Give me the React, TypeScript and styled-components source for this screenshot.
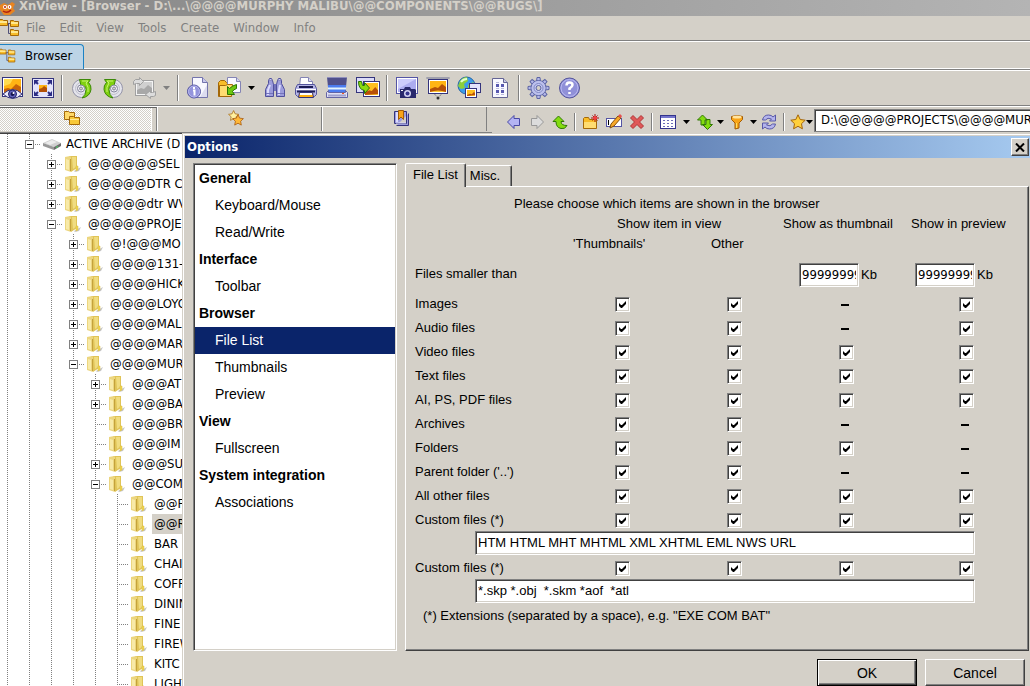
import React from 'react';
import styled, { createGlobalStyle, css } from 'styled-components';

const face = '#d4d0c8';
const tahoma = `"DejaVu Sans Condensed", "DejaVu Sans", sans-serif`;
const arial = `"Liberation Sans", Arial, sans-serif`;

const Global = createGlobalStyle`
  * { box-sizing: border-box; }
  body { margin: 0; background: ${face}; overflow: hidden; }
  button, input { font: inherit; color: inherit; }
`;

const sunken = css`
  border: 1px solid;
  border-color: #808080 #fff #fff #808080;
  box-shadow: inset 1px 1px #404040, inset -1px -1px ${face};
`;

/* ---------- main window ---------- */

const Desktop = styled.div`
  position: relative;
  height: 100vh;
  overflow: hidden;
  display: flex;
  flex-direction: column;
  background: ${face};
  font: 13px/16px ${tahoma};
  color: #000;
`;

const WindowTitle = styled.header`
  display: flex;
  align-items: flex-end;
  gap: 3px;
  flex: none;
  height: 16px;
  overflow: hidden;
  background: linear-gradient(90deg, #868686, #b4b4b4);
  color: ${face};
  white-space: nowrap;
`;

const WindowName = styled.h1`
  margin: 0;
  font: bold 13px/20px ${tahoma};
`;

const MenuBar = styled.nav`
  display: flex;
  align-items: center;
  flex: none;
  gap: 14px;
  height: 25px;
  border-bottom: 1px solid #808080;
`;

const MenuMark = styled.span`
  display: flex;
  margin-right: -8px;
`;

const MenuItem = styled.button`
  padding: 0;
  border: 0;
  background: none;
  color: #808080;
`;

const DocumentTabs = styled.div`
  display: flex;
  flex: none;
  height: 29px;
  padding-top: 2px;
  border-top: 1px solid #fff;
  border-bottom: 1px solid #808080;
  box-shadow: inset 0 -1px #fff;
`;

const DocumentTab = styled.button`
  display: flex;
  align-items: center;
  gap: 9px;
  width: 84px;
  padding: 0 0 2px;
  border: 1px solid #1c82c4;
  border-width: 1px 1px 0 0;
  border-radius: 0 4px 0 0;
  background: #bcd4e6;
`;

const Toolbar = styled.div`
  display: flex;
  align-items: center;
  flex: none;
  height: 36px;
  margin-left: -4px;
  border-top: 1px solid #fff;
  border-bottom: 1px solid #808080;
`;

const ToolButton = styled.button<{ $size?: number }>`
  display: flex;
  align-items: center;
  justify-content: center;
  flex: none;
  width: ${(p) => p.$size ?? 31}px;
  height: 24px;
  padding: 0;
  border: 0;
  background: none;
`;

const Separator = styled.span<{ $height?: number }>`
  flex: none;
  width: 2px;
  height: ${(p) => p.$height ?? 26}px;
  margin: 0 3px;
  border-left: 1px solid #808080;
  border-right: 1px solid #fff;
`;

const SecondBar = styled.div`
  display: flex;
  align-items: flex-start;
  flex: none;
  height: 27px;
  border-top: 1px solid #fff;
`;

const PanelTabs = styled.div`
  display: flex;
  flex: none;
  width: 492px;
  height: 26px;
  padding-bottom: 1px;
  border-bottom: 1px solid #808080;
`;

const PanelTab = styled.button<{ $active?: boolean }>`
  display: flex;
  align-items: center;
  justify-content: center;
  width: ${(p) => (p.$active ? 157 : 165)}px;
  padding: 0 7px 3px 0;
  border: 0;
  border-right: 1px solid #808080;
  box-shadow: inset 1px 0 #fff;
  background: none;
  ${(p) =>
    p.$active &&
    css`
      padding-right: 13px;
      border-top: 1px solid #606060;
      background: conic-gradient(#fff 25%, ${face} 0 50%, #fff 0 75%, ${face} 0) 0 0 / 2px 2px;
      box-shadow: inset -4px 0 ${face}, inset -5px 0 #fff;
    `}
`;

const AddressBar = styled.div`
  display: flex;
  align-items: center;
  flex: 1;
  min-width: 0;
  height: 26px;
  padding-left: 10px;
`;

const AddressTools = styled.div`
  display: flex;
  align-items: center;
  padding-top: 4px;
`;

const AddressField = styled.input`
  flex: 1;
  min-width: 0;
  height: 23px;
  margin-top: 1px;
  padding: 0 0 2px 6px;
  background: #fff;
  border: 1px solid #808080;
  border-right: 0;
  border-radius: 0;
  box-shadow: inset 1px 1px #404040;
`;

/* ---------- folder tree ---------- */

const TreePane = styled.ul`
  flex: 1;
  min-height: 0;
  margin: 0;
  padding: 0;
  overflow: hidden;
  list-style: none;
  background: #fff;
  border-top: 1px solid #404040;
`;

const TreeRow = styled.li`
  display: flex;
  height: 20px;
  margin-left: -4px;
  white-space: nowrap;
`;

const dotsDown = 'repeating-linear-gradient(#808080 0 1px, transparent 1px 2px) 11px 0 / 1px 100% no-repeat';
const dotsAcross = 'repeating-linear-gradient(90deg, #808080 0 1px, transparent 1px 2px) 100% 10px / 11px 1px no-repeat';

const Guide = styled.span<{ $branch?: boolean }>`
  flex: none;
  width: 22px;
  height: 20px;
  padding: 6px 0 0 7px;
  background: ${(p) => (p.$branch ? `${dotsDown}, ${dotsAcross}` : dotsDown)};
`;

const Expander = styled.button<{ $open: boolean }>`
  display: block;
  width: 9px;
  height: 9px;
  padding: 0;
  border: 1px solid #808080;
  background:
    linear-gradient(#000, #000) 1px 3px / 5px 1px no-repeat,
    linear-gradient(#000, #000) 3px 1px / 1px ${(p) => (p.$open ? 0 : 5)}px no-repeat,
    #fff;
`;

const TreeIcon = styled.span`
  display: flex;
  align-items: center;
  flex: none;
  width: 22px;
  padding-left: 2px;
`;

const TreeLabel = styled.span<{ $selected?: boolean }>`
  margin-left: 2px;
  padding: 0 2px;
  line-height: 20px;
  background: ${(p) => (p.$selected ? face : 'none')};
`;

/* ---------- options dialog ---------- */

const Dialog = styled.section`
  position: absolute;
  top: 133px;
  left: 182px;
  right: 0;
  padding: 1px 0 8px 1px;
  background: ${face};
  border: 1px solid ${face};
  border-width: 1px 0 0 1px;
  box-shadow: inset 1px 1px #fff;
  font: 13px/16px ${arial};
`;

const DialogTitle = styled.header`
  display: flex;
  align-items: center;
  justify-content: space-between;
  height: 22px;
  margin: 1px 0 0 1px;
  padding: 0 1px 0 2px;
  background: linear-gradient(90deg, #0a246a, #a6caf0);
  color: #fff;
`;

const DialogName = styled.h2`
  margin: 0;
  font: bold 13px/20px ${tahoma};
`;

const raised = css`
  border: 1px solid;
  border-color: #fff #404040 #404040 #fff;
  box-shadow: inset -1px -1px #808080;
  background: ${face};
`;

const CloseButton = styled.button`
  display: flex;
  align-items: center;
  justify-content: center;
  width: 18px;
  height: 18px;
  padding: 0;
  ${raised}
`;

const DialogBody = styled.div`
  display: flex;
  gap: 8px;
  padding: 5px 1px 0 9px;
`;

const Categories = styled.nav`
  flex: none;
  width: 204px;
  padding: 1px;
  background: #fff;
  ${sunken}
`;

const CategoryHeading = styled.h3`
  margin: 0;
  padding-left: 4px;
  font: bold 14px/27px ${arial};
`;

const CategoryLink = styled.a<{ $selected?: boolean }>`
  display: block;
  padding-left: 20px;
  line-height: 27px;
  font-size: 14px;
  text-decoration: none;
  color: ${(p) => (p.$selected ? '#fff' : '#000')};
  background: ${(p) => (p.$selected ? '#0a246a' : 'none')};
`;

const Pages = styled.div`
  display: flex;
  flex-direction: column;
  flex: 1;
  min-width: 0;
`;

const PageTabs = styled.div`
  display: flex;
  align-items: flex-end;
  height: 23px;
`;

const PageTab = styled.button<{ $active?: boolean }>`
  position: relative;
  z-index: 1;
  height: ${(p) => (p.$active ? 24 : 21)}px;
  margin-bottom: ${(p) => (p.$active ? -1 : 0)}px;
  padding: ${(p) => (p.$active ? '0 7px 1px 7px' : '0 11px 0 4px')};
  background: ${face};
  border: 1px solid #fff;
  border-width: 1px 1px 0 ${(p) => (p.$active ? 1 : 0)}px;
  border-right-color: #404040;
  border-radius: 2px 2px 0 0;
  box-shadow: inset -1px 0 #808080;
`;

const Page = styled.div`
  flex: 1;
  padding: 6px 0 21px;
  ${raised}
`;

const PageIntro = styled.p`
  margin: 0;
  padding: 2px 0 0 108px;
  line-height: 18px;
`;

const Grid = styled.table`
  width: 100%;
  table-layout: fixed;
  border-collapse: collapse;
`;

const Col = styled.col<{ $width?: number }>`
  width: ${(p) => (p.$width ? `${p.$width}px` : 'auto')};
`;

const Head = styled.th<{ $indent: number }>`
  height: 20px;
  padding: 2px 0 0 ${(p) => p.$indent}px;
  font-weight: normal;
  line-height: 18px;
  text-align: left;
  white-space: nowrap;
`;

const RowLabel = styled.th`
  height: 24px;
  padding: 2px 0 0 9px;
  font-weight: normal;
  line-height: 22px;
  text-align: left;
`;

const SizeLabel = styled(RowLabel)`
  height: 38px;
  padding-top: 12px;
  line-height: 18px;
  vertical-align: top;
`;

const SizeCell = styled.td<{ $indent: number }>`
  padding: 10px 0 0 ${(p) => p.$indent}px;
  vertical-align: top;
`;

const SizeField = styled.label`
  display: flex;
  align-items: center;
  gap: 2px;
`;

const NumberBox = styled.input`
  width: 60px;
  height: 24px;
  padding: 0 2px 2px;
  border-radius: 0;
  background: #fff;
  font-family: ${tahoma};
  ${sunken}
`;

const Cell = styled.td<{ $indent: number }>`
  padding: 6px 0 0 ${(p) => p.$indent}px;
  vertical-align: top;
`;

const Tick = styled.input`
  appearance: none;
  display: block;
  width: 15px;
  height: 15px;
  margin: 0;
  padding: 3px;
  background: #fff;
  ${sunken}
  &:checked::before {
    content: '';
    display: block;
    width: 7px;
    height: 7px;
    background: #000;
    clip-path: polygon(0 2px, 2px 4px, 3px 4px, 7px 0, 7px 3px, 3px 7px, 2px 7px, 0 5px);
  }
`;

const Dash = styled.span`
  display: block;
  width: 8px;
  height: 2px;
  margin: 7px 0 0 2px;
  background: #000;
`;

const ExtensionCell = styled.td`
  height: 24px;
  padding: 0 53px 0 69px;
`;

const ExtensionBox = styled.input`
  display: block;
  width: 100%;
  height: 24px;
  padding: 0 2px 2px;
  border-radius: 0;
  background: #fff;
  ${sunken}
`;

const Note = styled.p`
  margin: 0;
  padding-left: 17px;
  line-height: 26px;
`;

const DialogButtons = styled.div`
  display: flex;
  justify-content: flex-end;
  gap: 8px;
  padding: 8px 5px 0;
`;

const PushButton = styled.button<{ $default?: boolean }>`
  width: 100px;
  height: 27px;
  padding: 0;
  font-size: 14px;
  ${raised}
  ${(p) =>
    p.$default &&
    css`
      border-color: #000;
      box-shadow: inset 1px 1px #fff, inset -1px -1px #404040, inset -2px -2px #808080;
    `}
`;

/* ---------- icons ---------- */

const Svg = ({ s = 24, children }: { s?: number; children: React.ReactNode }) => (
  <svg width={s} height={s} viewBox={`0 0 ${s} ${s}`} aria-hidden="true">
    {children}
  </svg>
);

const Picture = ({ x, y, w, h }: { x: number; y: number; w: number; h: number }) => (
  <g>
    <rect x={x + 0.5} y={y + 0.5} width={w - 1} height={h - 1} fill="#fff" stroke="#34347c" />
    <rect x={x + 2} y={y + 2} width={w - 4} height={h - 4} fill="#ffc020" />
    <path
      d={`M${x + 2} ${y + h * 0.7}l${w * 0.25} -${h * 0.12} ${w * 0.15} ${h * 0.05} ${w * 0.2} -${h * 0.25} ${w * 0.4 - 4} ${h * 0.2}V${y + h - 3}L${x + 2} ${y + h - 2}z`}
      fill="#b85008"
    />
  </g>
);

const FolderTree = ({ s = 20 }: { s?: number }) => (
  <svg width={s} height={s} viewBox="0 0 20 20" aria-hidden="true">
    <path d="M8 5.500h3M8.500 5v10.500h3" fill="none" stroke="#505078" />
    {[[-1, 1], [10, 2], [10, 11]].map(([x, y]) => (
      <g key={`${x}${y}`}>
        <path d={`M${x + 0.5} ${y + 6.5}v-6h3l1 1h4v5z`} fill="#f8bc28" stroke="#a46808" />
        <path d={`M${x + 1} ${y + 3}h7`} stroke="#ffe890" strokeWidth="2" />
      </g>
    ))}
  </svg>
);

const ViewIcon = () => (
  <Svg>
    <rect x="2.500" y="1.500" width="20" height="19" fill="#fff" stroke="#34347c" />
    <path d="M4 3h17v16H4z" fill="#ffb414" />
    <path d="M4 3h9l-3 5-6 2z" fill="#ffdc50" />
    <path d="M4 13l4-1 3 1 5-5 5 3v8H4z" fill="#c86408" />
    <path d="M3 18q10-9 19 0-9 9-19 0z" fill="#ececfc" stroke="#34347c" />
    <circle cx="12.500" cy="18" r="4" fill="#6464bc" stroke="#24246c" />
    <circle cx="12.500" cy="18" r="2" fill="#14144c" />
    <circle cx="13.500" cy="17" r="1" fill="#fff" />
  </Svg>
);

const FullScreenIcon = () => (
  <Svg>
    <rect x="1.500" y="2.500" width="21" height="19" fill="#e4e4fc" stroke="#34347c" />
    <path d="M3 4h5L3 9zM21 4h-5l5 5zM3 20h5l-5-5zM21 20h-5l5-5z" fill="#2c2c84" />
    <path d="M5 6l2 2M19 6l-2 2M5 18l2-2M19 18l-2-2" stroke="#2c2c84" strokeWidth="2" />
    <rect x="8" y="9" width="8" height="7" fill="#ffb414" />
    <path d="M8 13l3-1 2-2 3 2v4H8z" fill="#b45008" />
  </Svg>
);

const RotateIcon = ({ flip }: { flip?: boolean }) => (
  <Svg>
    <g transform={flip ? 'translate(24 0) scale(-1 1)' : undefined}>
      <circle cx="11.500" cy="12.500" r="9" fill="#e4e4ec" stroke="#9494a8" />
      <circle cx="11.500" cy="12.500" r="6" fill="none" stroke="#c0c0cc" />
      <path
        d="M9.500 3.500h11l-2 3q3 3 2.500 7-1 7-9 8.500 4-3 4-8.500 0-2-1-3l-3 3z"
        fill="#80d010"
        stroke="#3c8808"
      />
      <path d="M12 5h6l-2 2q3 4 2 9" fill="none" stroke="#c8f470" />
      <circle cx="11" cy="12.500" r="3.500" fill="#f4f4f8" stroke="#84849c" />
      <circle cx="11" cy="12.500" r="1.500" fill={face} stroke="#84849c" />
    </g>
  </Svg>
);

const ConvertIcon = () => (
  <Svg>
    <rect x="3.500" y="4.500" width="18" height="15" fill="#f4f4f4" stroke="#a0a0a0" />
    <path d="M5 6h15v12H5z" fill="#d0d0d0" />
    <path d="M5 14l4-2 3 1 4-4 4 3v6H5z" fill="#a8a8a8" />
    <path d="M1.500 8.500v-3l2-2h4v-2l4 4-4 4v-2h-3zM23.500 15.500v4l-2 1h-3v2l-5-4 5-4v2h2z" fill="#dcdcdc" stroke="#a0a0a0" />
  </Svg>
);

const InfoIcon = () => (
  <Svg>
    <path d="M6.500 1.500h10l5 5v15h-15z" fill="#f8f8ff" stroke="#7474ac" />
    <path d="M16.500 1.500v5h5" fill="#c8c8ec" stroke="#7474ac" />
    <path d="M21 9v12h-7z" fill="#dcdcf0" />
    <circle cx="8" cy="15.500" r="6.500" fill="#9494dc" stroke="#5454a0" />
    <circle cx="8" cy="15.500" r="5.500" fill="none" stroke="#b8b8ee" />
    <path d="M7 14.500h1.500v5M8 11v2" fill="none" stroke="#fff" strokeWidth="2" />
  </Svg>
);

const OpenIcon = () => (
  <Svg>
    <path d="M1.500 20.500v-14l2-2h4l2 2h3v14z" fill="#f8bc28" stroke="#a46808" />
    <path d="M10.500 1.500h9l4 4v11h-13z" fill="#f8f8ff" stroke="#8484b4" />
    <path d="M19.500 1.500v4h4" fill="#d4d4ec" stroke="#8484b4" />
    <path d="M2.500 20.500v-11h6l2-1h5l-1 12z" fill="#ffdc70" stroke="#a46808" />
    <path d="M10.500 18.500v-8l2 2q3-3 7-4v4q-3 1-4 3l2 3z" fill="#6cc810" stroke="#287404" />
  </Svg>
);

const BinocularsIcon = () => (
  <Svg>
    <path d="M9 8h6v7H9z" fill="#7474bc" />
    <path d="M2.500 20.500v-7l3-6V4.500h4l1 4v12zM21.500 20.500v-7l-3-6V4.500h-4l-1 4v12z" fill="#9c9cdc" stroke="#50509c" />
    <path d="M5.500 4.500l1-2h2l1 2M14.500 4.500l1-2h2l1 2" fill="#c8c8f0" stroke="#50509c" />
    <path d="M5 19v-5l2-5M16 19v-5l1-5" fill="none" stroke="#dcdcfc" strokeWidth="2" />
    <path d="M3 17.500h7M14 17.500h7" stroke="#7474bc" />
  </Svg>
);

const PrinterIcon = () => (
  <Svg>
    <path d="M5.500 10.500l1-9h8l4 4v5z" fill="#fff" stroke="#8484b4" />
    <path d="M14.500 1.500v4h4" fill="#dcdcf0" stroke="#8484b4" />
    <path d="M3.500 8.500h17l2 4v6l-2 2h-17l-2-2v-6z" fill="#b4b4e4" stroke="#54549c" />
    <path d="M5 11h14M3 15.500h18" stroke="#1c1c54" strokeWidth="2" />
    <path d="M2 13.500h20" stroke="#fff" />
    <path d="M5.500 16.500h13l1 5h-15z" fill="#ffb010" stroke="#34347c" />
    <path d="M6 18h12" stroke="#fff" strokeWidth="2" />
  </Svg>
);

const ScannerIcon = () => (
  <Svg>
    <path d="M2 1h20l-1 10H3z" fill="#50508c" />
    <path d="M2 1.500h20" stroke="#9090bc" />
    <path d="M3 9h18v7H3z" fill="#4c7cf0" />
    <path d="M3 12.500h18" stroke="#e4f4ff" strokeWidth="2" />
    <path d="M1.500 16.500l2-2v2h17v-2l2 2v5h-21z" fill="#e0e0f4" stroke="#6464a4" />
    <path d="M3 19.500h18" stroke="#a0a0cc" strokeWidth="2" />
    <path d="M17 17h2v1h-2z" fill="#f05820" />
  </Svg>
);

const BatchIcon = () => (
  <Svg>
    <rect x="0.500" y="1.500" width="18" height="15" fill="#dcdcf8" stroke="#34347c" />
    <Picture x={7} y={5} w={17} h={16} />
    <path d="M2.500 5.500h3l1 4h2v-3l5 5.500-5 5.500v-3q-6-1-6-9z" fill="#8cdc10" stroke="#287404" />
  </Svg>
);

const CaptureIcon = () => (
  <Svg>
    <rect x="1.500" y="1.500" width="21" height="16" fill="#fff" stroke="#5454a4" />
    <path d="M3 3h18v13H3z" fill="#acacf0" />
    <path d="M3 3h18L3 13z" fill="#ccccfc" />
    <path d="M5 13h4l1-2h5l1 2h4l1 1v8H5z" fill="#28286c" />
    <circle cx="12.500" cy="17.500" r="3.500" fill="#d4d4f4" />
    <circle cx="12.500" cy="17.500" r="2" fill="#34348c" />
    <path d="M6 14.500h2" stroke="#fff" />
  </Svg>
);

const SlideshowIcon = () => (
  <Svg>
    <path d="M8.500 18l3.500 4 3.500-4" fill="none" stroke="#606060" strokeDasharray="1 1" />
    <circle cx="12" cy="22" r="1.500" fill="#303030" />
    <rect x="2.500" y="3.500" width="19" height="14" fill="#fff" stroke="#34347c" />
    <path d="M4 5h16v11H4z" fill="#ffb414" />
    <path d="M4 13l5-2 3 1 4-4 4 3v5H4z" fill="#b45008" />
    <path d="M4 16q8-3 16 0z" fill="#ffc830" />
    <path d="M0.500 1.500h23v1h-23z" fill="#fff" stroke="#a0a0ac" />
  </Svg>
);

const GlobeIcon = () => (
  <Svg>
    <circle cx="9.500" cy="9.500" r="8.500" fill="#3c9cec" stroke="#2464a4" />
    <path d="M3 5q3-4 7-4l1 4-4 3 1 4-4 1-3-3zM11 9l5-3 2 3-3 6-4-1z" fill="#8cd03c" />
    <path d="M4 6q2-3 6-3" stroke="#e4ffd0" fill="none" strokeWidth="2" />
    <rect x="12.500" y="7.500" width="11" height="9" fill="#e4e4fc" stroke="#34347c" />
    <Picture x={8} y={12} w={12} h={10} />
  </Svg>
);

const ContactIcon = () => (
  <Svg>
    <path d="M4.500 2.500h11l4 4v15h-15z" fill="#f8f8ff" stroke="#646494" />
    <path d="M15.500 2.500v4h4" fill="#c8c8e4" stroke="#646494" />
    <path d="M8 8h3v3H8zM13 8h3v3h-3zM8 14h3v3H8zM13 14h3v3h-3z" fill="#5858b0" />
    <path d="M8 6.500h3M8 12.500h3M13 12.500h3M8 18.500h3M13 18.500h3" stroke="#b8b8dc" />
  </Svg>
);

const GearIcon = () => (
  <Svg>
    <g fill="#b4b8e8" stroke="#5c64a4">
      {[0, 45, 90, 135, 180, 225, 270, 315].map((a) => (
        <path key={a} d="M9.500 5.500l.5-4h3l.5 4z" transform={`rotate(${a} 11.500 12)`} />
      ))}
      <circle cx="11.500" cy="12" r="7.500" />
    </g>
    <circle cx="11.500" cy="12" r="7" fill="#bcc0ec" />
    <circle cx="11.500" cy="12" r="4.500" fill="#c8ccf4" stroke="#8088c4" />
    <circle cx="11.500" cy="12" r="2.500" fill={face} stroke="#5c64a4" />
  </Svg>
);

const HelpIcon = () => (
  <Svg>
    <circle cx="11.500" cy="12" r="10" fill="#9090d8" stroke="#54549c" />
    <circle cx="11.500" cy="12" r="8.500" fill="none" stroke="#b8b8f0" />
    <path d="M8.500 9.500q0-3 3-3t3 2.500q0 1.500-3 3.500v1.500M11.500 16v2" fill="none" stroke="#fff" strokeWidth="2.500" />
  </Svg>
);

const ArrowIcon = ({ color, stroke, flip }: { color: string; stroke: string; flip?: boolean }) => (
  <Svg s={16}>
    <path
      d="M1.500 8L8 1.500v3h5.500v7H8v3z"
      fill={color}
      stroke={stroke}
      transform={flip ? 'translate(16 0) scale(-1 1)' : undefined}
    />
  </Svg>
);

const UpIcon = () => (
  <Svg s={16}>
    <path d="M1 7.500L6.500 2 12 7.500H9q0 4 6 4-2 4-6 3-5-1-5-7z" fill="#84dc10" stroke="#307804" />
  </Svg>
);

const NewFolderIcon = () => (
  <Svg s={16}>
    <path d="M.5 14.500v-10l1-1h4l1 2h7v9z" fill="#f8bc28" stroke="#a46808" />
    <path d="M1 14V8h12v6z" fill="#ffdc70" />
    <path d="M12 0v8M8 4h8M9.500 1.500l5 5M14.500 1.500l-5 5" stroke="#a01010" />
    <circle cx="12" cy="4" r="2" fill="#f04040" />
  </Svg>
);

const RenameIcon = () => (
  <Svg s={16}>
    <rect x=".5" y="4.500" width="15" height="8" fill="#fff" stroke="#5454a4" />
    <path d="M2.500 6v5" stroke="#000" />
    <path d="M4 14l1-4 7-8 3 2-7 8z" fill="#f8a828" stroke="#845008" />
    <path d="M12 2l3 2 1-2-2-2z" fill="#e45050" />
  </Svg>
);

const DeleteIcon = () => (
  <Svg s={16}>
    <path d="M1.500 4L4 1.500l4 4 4-4L14.500 4l-4 4 4 4-2.500 2.500-4-4-4 4L1.500 12l4-4z" fill="#e05858" stroke="#b03434" />
  </Svg>
);

const ListIcon = () => (
  <Svg s={16}>
    <rect x=".5" y="1.500" width="15" height="13" fill="#fff" stroke="#34348c" />
    <path d="M1 3h14" stroke="#7474cc" strokeWidth="2" />
    <path d="M3 6.500h10M3 9.500h10M3 12.500h10" stroke="#6c6cb8" strokeDasharray="2 2" />
  </Svg>
);

const SortIcon = () => (
  <Svg s={16}>
    <path d="M.5 6L5.500 1 10.500 6H8v5H4V6zM5.500 10.500l5 5 5-5H13v-5H9v5z" fill="#84dc10" stroke="#307804" />
  </Svg>
);

const FilterIcon = () => (
  <Svg s={16}>
    <path d="M2.500 2.500q5.500-2 11 0v3L10 9v5l-4 1V9L2.500 5.500z" fill="#f8a418" stroke="#a45c04" />
    <ellipse cx="8" cy="3" rx="4.500" ry="1.500" fill="#ffe4a0" />
    <path d="M7.500 9v5" stroke="#ffe060" />
  </Svg>
);

const RefreshIcon = () => (
  <Svg s={16}>
    <path d="M1.500 6q1-5 6-5 3 0 4.500 2l2.500-2v6h-6l2-2q-4-2-6 1zM14.500 10q-1 5-6 5-3 0-4.500-2l-2.500 2V9h6l-2 2q4 2 6-1z" fill="#b4b4ec" stroke="#5858a8" />
  </Svg>
);

const starPath = 'M8 .8l2.200 4.700 5 .7-3.700 3.500.9 5.100L8 12.300l-4.400 2.500.9-5.100L.8 6.200l5-.7z';

const StarIcon = () => (
  <Svg s={16}>
    <path d={starPath} fill="#ffd03c" stroke="#a46408" />
  </Svg>
);

const TwoStarsIcon = () => (
  <Svg s={16}>
    <path d={starPath} transform="scale(.7)" fill="#fff0a0" stroke="#a46408" />
    <path d={starPath} transform="translate(4 4) scale(.75)" fill="#ffb838" stroke="#a45408" />
  </Svg>
);

const FoldersIcon = () => (
  <Svg s={16}>
    <path d="M.5 9.500v-8h4l1 1h5v7z" fill="#ffd868" stroke="#a46808" />
    <path d="M5.500 14.500v-8h4l1 1h5v7z" fill="#f8c838" stroke="#a46808" />
    <path d="M6 9.500h9" stroke="#ffe890" />
  </Svg>
);

const BookmarkIcon = () => (
  <Svg s={16}>
    <path d="M3.500 15.500h12v-12M1.500 1.500h12v12h-12z" fill="#9c9cdc" stroke="#34347c" />
    <path d="M3 2h2v10H3zM3 12.500h10v1H3z" fill="#dcdcff" />
    <path d="M5.500.5h5v9L8 7 5.500 9.500z" fill="#f8a418" stroke="#a45c04" />
  </Svg>
);

const CaretIcon = ({ color = '#000' }: { color?: string }) => (
  <svg width="7" height="4" viewBox="0 0 7 4" aria-hidden="true">
    <path d="M0 0h7L3.500 4z" fill={color} />
  </svg>
);

const FolderIcon = () => (
  <svg width="18" height="18" viewBox="0 0 18 18" aria-hidden="true">
    <path d="M10 16l7-4-2 4-4 1z" fill="#a0a0a0" opacity=".6" />
    <path d="M5 1h8v12l-6 4z" fill="#e0c458" />
    <path d="M8 2h4v10l-3 2z" fill="#f0dc80" />
    <path d="M1 2l5-1 1 1v15l-6-2z" fill="#ecd680" />
    <path d="M2 4l3 1v10l-3-1z" fill="#f8eaa8" />
    <path d="M6.500 4v12" stroke="#c4a23c" />
    <path d="M12 11h2v4l-2 1z" fill="#f0d850" stroke="#d8b840" strokeWidth=".5" />
  </svg>
);

const DriveIcon = () => (
  <svg width="20" height="12" viewBox="0 0 20 12" aria-hidden="true">
    <path d="M1 5l9-4 9 4-7 4z" fill="#d0d0d0" />
    <path d="M3 5l7-3 5 2-7 3z" fill="#ececec" />
    <path d="M1 5l11 4v3L1 8z" fill="#989898" />
    <path d="M12 9l7-4v3l-7 4z" fill="#6c6c6c" />
    <path d="M14 9.500l2-1" stroke="#40e060" />
  </svg>
);

const AppIcon = () => (
  <svg width="16" height="16" viewBox="0 0 16 16" aria-hidden="true">
    <path d="M0 5l4-2 4 2 4-3 3 2-2 4 2 3-5 4H4l-4-5z" fill="#e88420" />
    <circle cx="5" cy="7" r="2" fill="#fff" />
    <circle cx="9.500" cy="7" r="2" fill="#fff" />
    <path d="M4 7h2M9 7h1M3 11q4 3 8-1" stroke="#b02010" strokeWidth="1.500" fill="none" />
  </svg>
);

/* ---------- data ---------- */

const menus = ['File', 'Edit', 'View', 'Tools', 'Create', 'Window', 'Info'];

type Node = { level: number; label: string; state?: 'open' | 'closed'; selected?: boolean };

const nodes: Node[] = [
  { level: 0, label: 'ACTIVE ARCHIVE (D', state: 'open' },
  { level: 1, label: '@@@@@@SEL', state: 'closed' },
  { level: 1, label: '@@@@@DTR C', state: 'closed' },
  { level: 1, label: '@@@@@dtr WV', state: 'closed' },
  { level: 1, label: '@@@@@PROJE', state: 'open' },
  { level: 2, label: '@!@@@MO', state: 'closed' },
  { level: 2, label: '@@@@131-', state: 'closed' },
  { level: 2, label: '@@@@HICK', state: 'closed' },
  { level: 2, label: '@@@@LOYO', state: 'closed' },
  { level: 2, label: '@@@@MAL', state: 'closed' },
  { level: 2, label: '@@@@MAR', state: 'closed' },
  { level: 2, label: '@@@@MUR', state: 'open' },
  { level: 3, label: '@@@AT', state: 'closed' },
  { level: 3, label: '@@@BA', state: 'closed' },
  { level: 3, label: '@@@BR' },
  { level: 3, label: '@@@IM' },
  { level: 3, label: '@@@SU', state: 'closed' },
  { level: 3, label: '@@COM', state: 'open' },
  { level: 4, label: '@@F' },
  { level: 4, label: '@@R', selected: true },
  { level: 4, label: 'BAR' },
  { level: 4, label: 'CHAI' },
  { level: 4, label: 'COFF' },
  { level: 4, label: 'DININ' },
  { level: 4, label: 'FINE' },
  { level: 4, label: 'FIREW' },
  { level: 4, label: 'KITC' },
  { level: 4, label: 'LIGHT' },
];

const categories = [
  { title: 'General', items: ['Keyboard/Mouse', 'Read/Write'] },
  { title: 'Interface', items: ['Toolbar'] },
  { title: 'Browser', items: ['File List', 'Thumbnails', 'Preview'] },
  { title: 'View', items: ['Fullscreen'] },
  { title: 'System integration', items: ['Associations'] },
];

const columns = [
  { name: "'Thumbnails' view", indent: 49 },
  { name: 'Other views', indent: 49 },
  { name: 'Show as thumbnail', indent: 57 },
  { name: 'Show in preview', indent: 57 },
];

type FileKind = { label: string; ticks: number[]; extensions?: string };

const kinds: FileKind[] = [
  { label: 'Images', ticks: [1, 1, 0, 1] },
  { label: 'Audio files', ticks: [1, 1, 0, 1] },
  { label: 'Video files', ticks: [1, 1, 1, 1] },
  { label: 'Text files', ticks: [1, 1, 1, 1] },
  { label: 'AI, PS, PDF files', ticks: [1, 1, 1, 1] },
  { label: 'Archives', ticks: [1, 1, 0, 0] },
  { label: 'Folders', ticks: [1, 1, 1, 0] },
  { label: "Parent folder ('..')", ticks: [1, 1, 0, 0] },
  { label: 'All other files', ticks: [1, 1, 1, 1] },
  { label: 'Custom files (*)', ticks: [1, 1, 1, 1], extensions: 'HTM HTML MHT MHTML XML XHTML EML NWS URL' },
  { label: 'Custom files (*)', ticks: [1, 1, 1, 1], extensions: '*.skp *.obj  *.skm *aof  *atl' },
];

/* ---------- parts ---------- */

const Tool = ({ name, size, children }: { name: string; size?: number; children: React.ReactNode }) => (
  <ToolButton type="button" aria-label={name} $size={size}>
    {children}
  </ToolButton>
);

const MainToolbar = () => (
  <Toolbar role="toolbar" aria-label="Main">
    <Tool name="View"><ViewIcon /></Tool>
    <Tool name="Full screen"><FullScreenIcon /></Tool>
    <Separator />
    <Tool name="Rotate left"><RotateIcon /></Tool>
    <Tool name="Rotate right"><RotateIcon flip /></Tool>
    <Tool name="Convert"><ConvertIcon /></Tool>
    <Tool name="Convert options" size={15}><CaretIcon color="#808080" /></Tool>
    <Separator />
    <Tool name="Properties"><InfoIcon /></Tool>
    <Tool name="Open with"><OpenIcon /></Tool>
    <Tool name="Open with options" size={15}><CaretIcon /></Tool>
    <Tool name="Search"><BinocularsIcon /></Tool>
    <Tool name="Print"><PrinterIcon /></Tool>
    <Tool name="Scan"><ScannerIcon /></Tool>
    <Tool name="Batch convert"><BatchIcon /></Tool>
    <Separator />
    <Tool name="Capture"><CaptureIcon /></Tool>
    <Tool name="Slide show"><SlideshowIcon /></Tool>
    <Tool name="Web page"><GlobeIcon /></Tool>
    <Tool name="Contact sheet"><ContactIcon /></Tool>
    <Separator />
    <Tool name="Options"><GearIcon /></Tool>
    <Tool name="About"><HelpIcon /></Tool>
  </Toolbar>
);

const Address = () => (
  <AddressBar>
    <AddressTools role="toolbar" aria-label="Navigation">
      <Tool name="Back" size={23}><ArrowIcon color="#b4b4f4" stroke="#4848a4" /></Tool>
      <Tool name="Forward" size={23}><ArrowIcon color="#dcdcdc" stroke="#989898" flip /></Tool>
      <Tool name="Up" size={23}><UpIcon /></Tool>
      <Separator $height={18} />
      <Tool name="New folder" size={23}><NewFolderIcon /></Tool>
      <Tool name="Rename" size={23}><RenameIcon /></Tool>
      <Tool name="Delete" size={23}><DeleteIcon /></Tool>
      <Separator $height={18} />
      <Tool name="View as" size={23}><ListIcon /></Tool>
      <Tool name="View choices" size={14}><CaretIcon /></Tool>
      <Tool name="Sort" size={23}><SortIcon /></Tool>
      <Tool name="Sort choices" size={8}><CaretIcon /></Tool>
      <Tool name="Filter" size={25}><FilterIcon /></Tool>
      <Tool name="Filter choices" size={8}><CaretIcon /></Tool>
      <Tool name="Refresh" size={23}><RefreshIcon /></Tool>
      <Separator $height={18} />
      <Tool name="Favorites" size={26}><StarIcon /><CaretIcon /></Tool>
    </AddressTools>
    <AddressField aria-label="Address" defaultValue="D:\@@@@@PROJECTS\@@@@MURPHY MALIBU\@@COMPONENTS\@@RUGS\" />
  </AddressBar>
);

const FolderNode = ({ node }: { node: Node }) => (
  <TreeRow>
    {Array.from({ length: node.level + 1 }, (_, i) => (
      <Guide key={i} />
    ))}
    <Guide $branch>
      {node.state && <Expander type="button" aria-label={`Toggle ${node.label}`} $open={node.state === 'open'} />}
    </Guide>
    <TreeIcon>{node.level === 0 ? <DriveIcon /> : <FolderIcon />}</TreeIcon>
    <TreeLabel $selected={node.selected}>{node.label}</TreeLabel>
  </TreeRow>
);

const SizeLimit = ({ name }: { name: string }) => (
  <SizeField>
    <NumberBox aria-label={name} defaultValue="999999999" />
    Kb
  </SizeField>
);

const KindRows = ({ kind }: { kind: FileKind }) => (
  <>
    <tr>
      <RowLabel scope="row">{kind.label}</RowLabel>
      {columns.map((column, i) => (
        <Cell key={column.name} $indent={column.indent}>
          {kind.ticks[i] ? (
            <Tick type="checkbox" defaultChecked aria-label={`${kind.label}: ${column.name}`} />
          ) : (
            <Dash />
          )}
        </Cell>
      ))}
    </tr>
    {kind.extensions && (
      <tr>
        <ExtensionCell colSpan={5}>
          <ExtensionBox aria-label="Extensions" defaultValue={kind.extensions} />
        </ExtensionCell>
      </tr>
    )}
  </>
);

const OptionsDialog = () => (
  <Dialog role="dialog" aria-label="Options">
    <DialogTitle>
      <DialogName>Options</DialogName>
      <CloseButton type="button" aria-label="Close">
        <svg width="10" height="9" viewBox="0 0 10 9" aria-hidden="true">
          <path d="M1 0.500l8 8M9 0.500l-8 8" stroke="#000" strokeWidth="2" />
        </svg>
      </CloseButton>
    </DialogTitle>
    <DialogBody>
      <Categories aria-label="Categories">
        {categories.map((group) => (
          <React.Fragment key={group.title}>
            <CategoryHeading>{group.title}</CategoryHeading>
            {group.items.map((item) => (
              <CategoryLink key={item} href="#" $selected={item === 'File List'}>
                {item}
              </CategoryLink>
            ))}
          </React.Fragment>
        ))}
      </Categories>
      <Pages>
        <PageTabs role="tablist">
          <PageTab type="button" role="tab" $active>File List</PageTab>
          <PageTab type="button" role="tab">Misc.</PageTab>
        </PageTabs>
        <Page>
          <PageIntro>Please choose which items are shown in the browser</PageIntro>
          <Grid>
            <colgroup>
              <Col $width={160} />
              <Col $width={112} />
              <Col $width={104} />
              <Col $width={120} />
              <Col />
            </colgroup>
            <thead>
              <tr>
                <td />
                <Head colSpan={2} $indent={51}>Show item in view</Head>
                <Head $indent={1}>Show as thumbnail</Head>
                <Head $indent={9}>Show in preview</Head>
              </tr>
              <tr>
                <td />
                <Head $indent={7}>'Thumbnails'</Head>
                <Head $indent={33}>Other</Head>
                <td />
                <td />
              </tr>
            </thead>
            <tbody>
              <tr>
                <SizeLabel scope="row">Files smaller than</SizeLabel>
                <td />
                <td />
                <SizeCell $indent={17}><SizeLimit name="Largest file shown as thumbnail" /></SizeCell>
                <SizeCell $indent={13}><SizeLimit name="Largest file shown in preview" /></SizeCell>
              </tr>
              {kinds.map((kind, i) => (
                <KindRows key={i} kind={kind} />
              ))}
            </tbody>
          </Grid>
          <Note>(*) Extensions (separated by a space), e.g. "EXE COM BAT"</Note>
        </Page>
      </Pages>
    </DialogBody>
    <DialogButtons>
      <PushButton type="button" $default>OK</PushButton>
      <PushButton type="button">Cancel</PushButton>
    </DialogButtons>
  </Dialog>
);

export default function App() {
  return (
    <>
      <Global />
      <Desktop>
        <WindowTitle>
          <AppIcon />
          <WindowName>XnView - [Browser - D:\...\@@@@MURPHY MALIBU\@@COMPONENTS\@@RUGS\]</WindowName>
        </WindowTitle>
        <MenuBar aria-label="Menu">
          <MenuMark>
            <FolderTree />
          </MenuMark>
          {menus.map((menu) => (
            <MenuItem key={menu} type="button">{menu}</MenuItem>
          ))}
        </MenuBar>
        <DocumentTabs>
          <DocumentTab type="button">
            <FolderTree s={16} />
            Browser
          </DocumentTab>
        </DocumentTabs>
        <MainToolbar />
        <SecondBar>
          <PanelTabs>
            <PanelTab type="button" aria-label="Folders" $active><FoldersIcon /></PanelTab>
            <PanelTab type="button" aria-label="Favorites"><TwoStarsIcon /></PanelTab>
            <PanelTab type="button" aria-label="Categories"><BookmarkIcon /></PanelTab>
          </PanelTabs>
          <Address />
        </SecondBar>
        <TreePane>
          {nodes.map((node, i) => (
            <FolderNode key={i} node={node} />
          ))}
        </TreePane>
        <OptionsDialog />
      </Desktop>
    </>
  );
}
